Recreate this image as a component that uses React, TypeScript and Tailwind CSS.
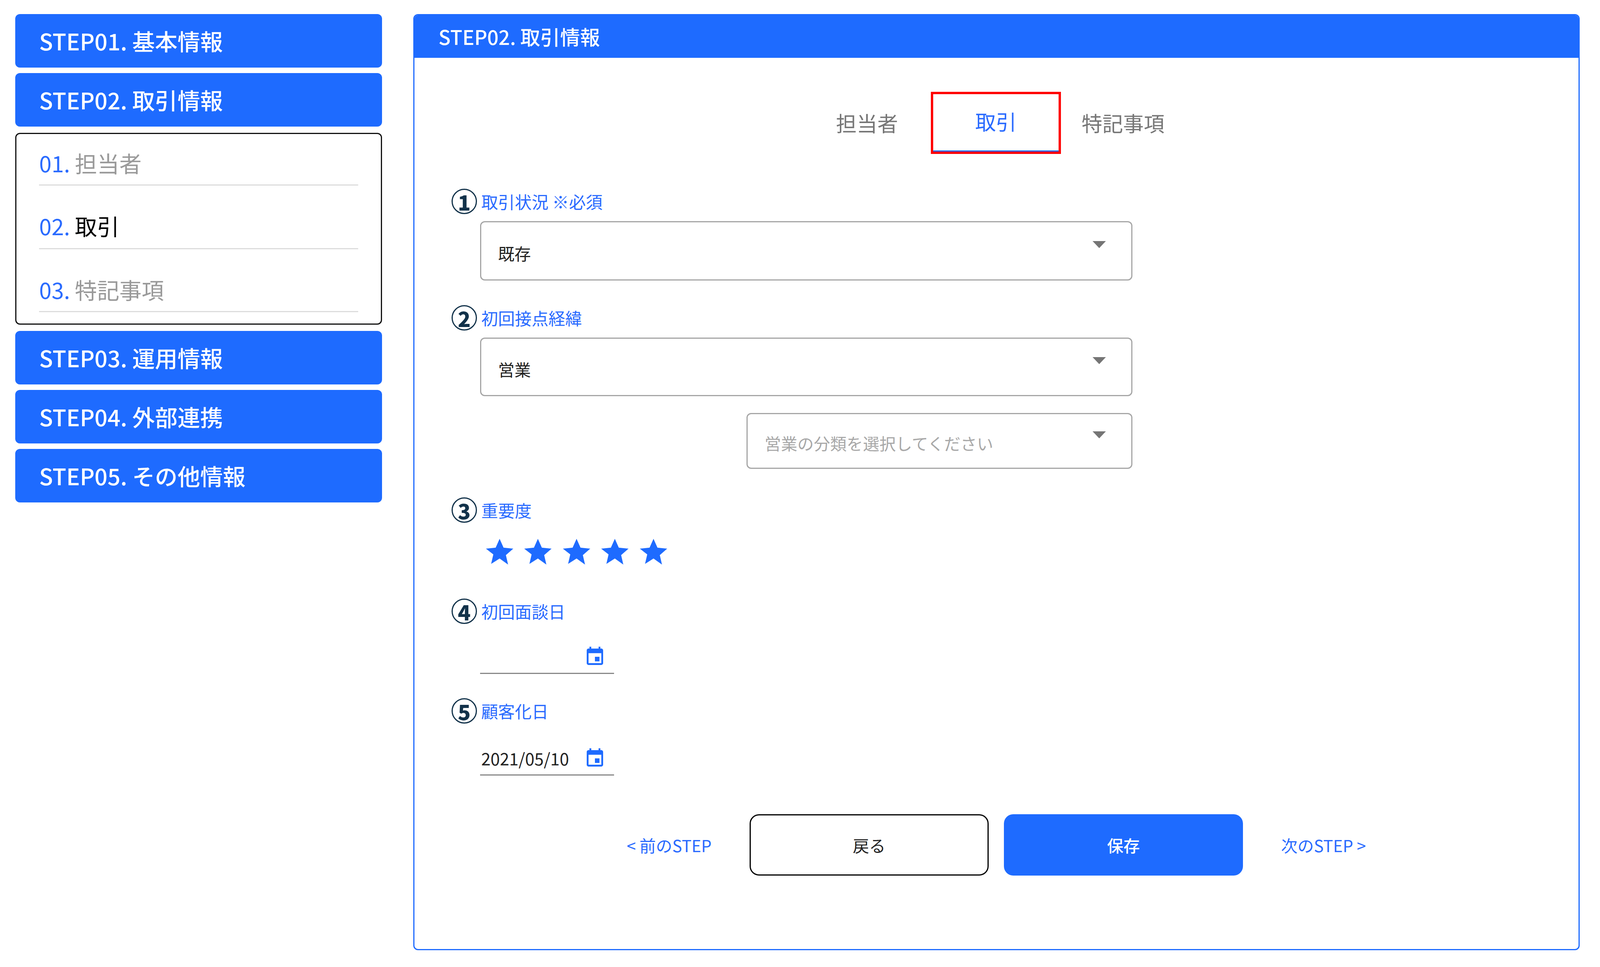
const FONT = { fontFamily: '"Noto Sans CJK JP", "Noto Sans", sans-serif' };

function StepBar({ label, className = "" }: { label: string; className?: string }) {
  return (
    <div className={`flex h-[137px] items-center rounded-[12px] bg-[#1e6bff] pl-[61px] text-[58px] font-medium text-white ${className}`}>
      {label}
    </div>
  );
}

function SubStep({ no, label, active, className = "" }: { no: string; label: string; active?: boolean; className?: string }) {
  return (
    <div className={`flex items-end border-b-[3px] border-[#dddddd] text-[57px] leading-[60px] ${className}`}>
      <span className="mr-[12px] text-[#2a6bff]">{no}</span>
      <span className={active ? "text-black" : "text-[#9a9a9a]"}>{label}</span>
    </div>
  );
}

function FieldLabel({ no, label, className = "" }: { no: number; label: string; className?: string }) {
  return (
    <div className={`flex h-[65px] items-center ${className}`}>
      <div className="flex h-[65px] w-[65px] items-center justify-center rounded-full border-[3px] border-[#12324a] text-[54px] font-black leading-none text-[#12324a]">
        {no}
      </div>
      <span className="ml-[11px] text-[43px] text-[#2a6bff]">{label}</span>
    </div>
  );
}

function Select({ value, placeholder, className = "" }: { value?: string; placeholder?: string; className?: string }) {
  return (
    <div className={`flex items-center justify-between rounded-[12px] border-[3px] border-[#a6a6a6] pl-[43px] pr-[65px] ${className}`}>
      <span className={`whitespace-nowrap pt-[10px] text-[42px] ${value ? "text-[#222222]" : "text-[#a8a8a8]"}`}>{value ?? placeholder}</span>
      <div className="mb-[32px] h-0 w-0 border-x-[17px] border-t-[18px] border-x-transparent border-t-[#757575]" />
    </div>
  );
}

function DateField({ value, className = "" }: { value?: string; className?: string }) {
  return (
    <div className={`ml-[73px] flex h-[86px] w-[343px] items-center justify-between border-b-[3px] border-[#888888] pr-[21px] ${className}`}>
      <span className="pl-[3px] text-[43px] text-[#222222]">{value}</span>
      <svg viewBox="0 0 24 24" className="h-[56px] w-[56px] fill-[#1e6bff]">
        <path d="M17 12h-5v5h5v-5zM16 1v2H8V1H6v2H5c-1.11 0-1.99.9-1.99 2L3 19c0 1.1.89 2 2 2h14c1.1 0 2-.9 2-2V5c0-1.1-.9-2-2-2h-1V1h-2zm3 18H5V8h14v11z" />
      </svg>
    </div>
  );
}

function Star() {
  return (
    <svg viewBox="0 0 24 24" className="h-[84px] w-[86px] fill-[#1e6bff]">
      <path d="M12 2.6l2.9 6.5 7.1.7-5.4 4.7 1.6 6.9L12 17l-6.2 3.9 1.6-6.9L2 9.8l7.1-.7z" />
    </svg>
  );
}

export default function App() {
  return (
    <div style={FONT} className="flex h-[2475px] w-full items-start bg-white pl-[0.96%] pr-[1.28%] pt-[36px]">
      {/* サイドメニュー */}
      <div className="flex w-[23.44%] shrink-0 flex-col">
        <StepBar label="STEP01. 基本情報" />
        <StepBar label="STEP02. 取引情報" className="mt-[14px]" />
        <div className="mt-[16px] h-[491px] rounded-[12px] border-[3px] border-[#111111] px-[58px]">
          <SubStep no="01." label="担当者" className="h-[132px] pb-[26px]" />
          <SubStep no="02." label="取引" active className="h-[163px] pb-[28px]" />
          <SubStep no="03." label="特記事項" className="h-[161px] pb-[26px]" />
        </div>
        <StepBar label="STEP03. 運用情報" className="mt-[16px]" />
        <StepBar label="STEP04. 外部連携" className="mt-[14px]" />
        <StepBar label="STEP05. その他情報" className="mt-[14px]" />
      </div>

      {/* メイン */}
      <div className="ml-[1.99%] flex h-[2396px] flex-1 flex-col rounded-[12px] border-[3px] border-[#1e6bff]">
        <div className="flex h-[109px] items-center rounded-t-[9px] bg-[#1e6bff] pl-[62px] text-[51px] font-medium text-white">
          STEP02. 取引情報
        </div>

        <div className="mt-[87px] flex items-center justify-center pl-[20px] text-[53px] text-[#777777]">
          <span className="mr-[84px]">担当者</span>
          <div className="flex h-[159px] w-[333px] items-center justify-center border-[6px] border-[#ff0000] pb-[8px] text-[#2a6bff] shadow-[inset_0_-3px_0_#1e6bff]">
            取引
          </div>
          <span className="ml-[53px]">特記事項</span>
        </div>

        <div className="flex flex-col pl-[3.2%]">
          <FieldLabel no={1} label="取引状況 ※必須" className="mt-[89px]" />
          <div className="ml-[73px] mt-[18px] flex w-[57.9%] flex-col items-end">
            <Select value="既存" className="h-[152px] w-full" />
          </div>

          <FieldLabel no={2} label="初回接点経緯" className="mt-[63px]" />
          <div className="ml-[73px] mt-[18px] flex w-[57.9%] flex-col items-end">
            <Select value="営業" className="h-[150px] w-full" />
            <Select placeholder="営業の分類を選択してください" className="mt-[43px] h-[143px] w-[59.15%]" />
          </div>

          <FieldLabel no={3} label="重要度" className="mt-[73px]" />
          <div className="ml-[80px] mt-[32px] flex gap-[12.5px]">
            <Star />
            <Star />
            <Star />
            <Star />
            <Star />
          </div>

          <FieldLabel no={4} label="初回面談日" className="mt-[78px]" />
          <DateField className="mt-[42px]" />

          <FieldLabel no={5} label="顧客化日" className="mt-[62px]" />
          <DateField value="2021/05/10" className="mt-[47px]" />
        </div>

        <div className="mt-[99px] flex items-center justify-center text-[42px]">
          <span className="whitespace-nowrap text-[#2a6bff]">&lt; 前のSTEP</span>
          <button className="ml-[3.26%] h-[157px] w-[20.55%] rounded-[24px] border-[3px] border-black text-[#222222]">戻る</button>
          <button className="ml-[1.3%] h-[157px] w-[20.55%] rounded-[24px] bg-[#1e6bff] font-medium text-white">保存</button>
          <span className="ml-[3.26%] whitespace-nowrap text-[#2a6bff]">次のSTEP &gt;</span>
        </div>
      </div>
    </div>
  );
}
